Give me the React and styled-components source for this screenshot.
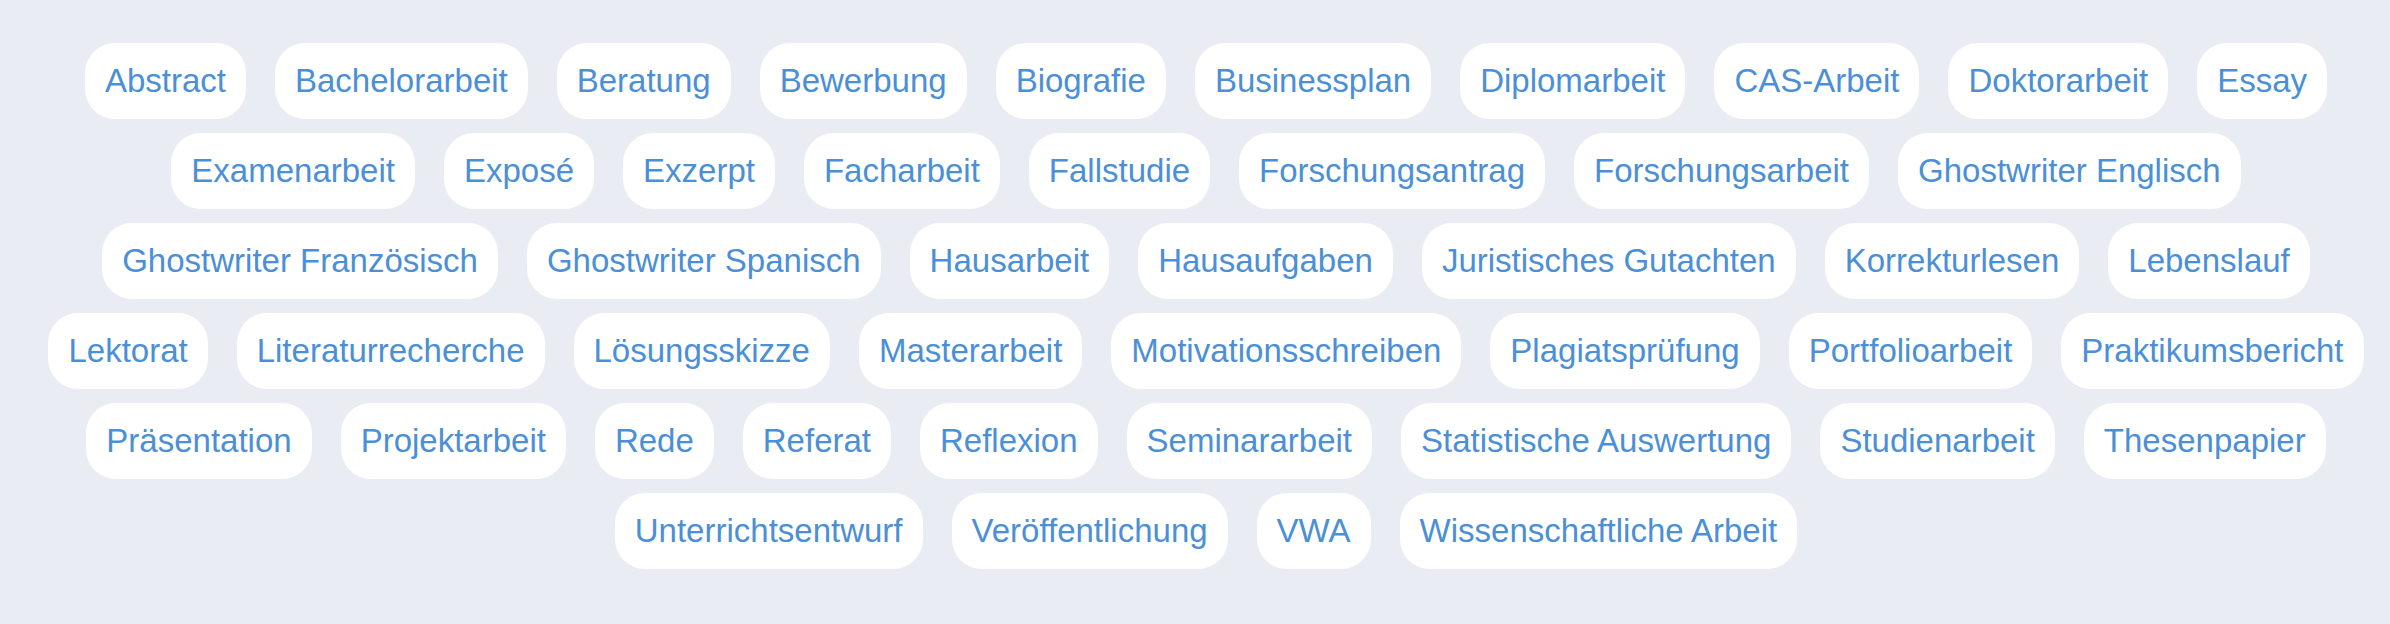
import React from 'react';
import styled, { createGlobalStyle } from 'styled-components';

const topics = [
  'Abstract', 'Bachelorarbeit', 'Beratung', 'Bewerbung', 'Biografie', 'Businessplan',
  'Diplomarbeit', 'CAS-Arbeit', 'Doktorarbeit', 'Essay', 'Examenarbeit', 'Exposé',
  'Exzerpt', 'Facharbeit', 'Fallstudie', 'Forschungsantrag', 'Forschungsarbeit',
  'Ghostwriter Englisch', 'Ghostwriter Französisch', 'Ghostwriter Spanisch', 'Hausarbeit',
  'Hausaufgaben', 'Juristisches Gutachten', 'Korrekturlesen', 'Lebenslauf', 'Lektorat',
  'Literaturrecherche', 'Lösungsskizze', 'Masterarbeit', 'Motivationsschreiben',
  'Plagiatsprüfung', 'Portfolioarbeit', 'Praktikumsbericht', 'Präsentation', 'Projektarbeit',
  'Rede', 'Referat', 'Reflexion', 'Seminararbeit', 'Statistische Auswertung', 'Studienarbeit',
  'Thesenpapier', 'Unterrichtsentwurf', 'Veröffentlichung', 'VWA', 'Wissenschaftliche Arbeit',
];

const GlobalStyle = createGlobalStyle`
  html, body {
    margin: 0;
    padding: 0;
    background: #e9ecf3;
  }
  body {
    font-family: 'Liberation Sans', Arial, sans-serif;
  }
`;

const Section = styled.section`
  padding: 43px 8px 58px 30px;
  background: #e9ecf3;
`;

const TagList = styled.ul`
  list-style: none;
  margin: 0;
  padding: 0;
  display: flex;
  flex-wrap: wrap;
  justify-content: center;
  gap: 14px 29px;
`;

const Tag = styled.li`
  background: #fff;
  border-radius: 30px;
  padding: 19px 20px;
  font-size: 33px;
  line-height: 38px;
  color: #4b8fd7;
  white-space: nowrap;
`;

const App = () => (
  <>
    <GlobalStyle />
    <Section>
      <TagList>
        {topics.map((t) => (
          <Tag key={t}>{t}</Tag>
        ))}
      </TagList>
    </Section>
  </>
);

export default App;
